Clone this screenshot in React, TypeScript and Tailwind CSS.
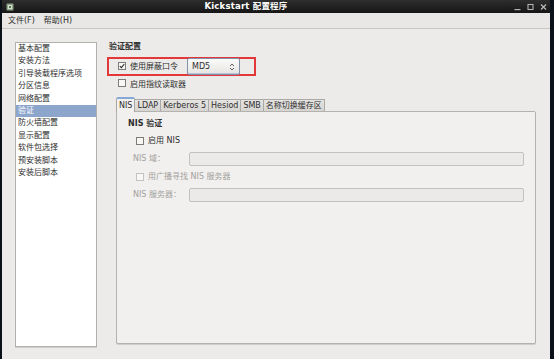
import React from "react";

const FONT = { fontFamily: '"DejaVu Sans", "Noto Sans CJK SC", sans-serif' };

function Check({ checked = false, disabled = false }: { checked?: boolean; disabled?: boolean }) {
  return (
    <span
      className={`inline-flex items-center justify-center w-[8px] h-[8px] border bg-[#f7f7f6] ${
        disabled ? "border-[#c4c2be]" : "border-[#7e7c78]"
      }`}
    >
      {checked && (
        <svg width="6" height="6" viewBox="0 0 6 6">
          <path d="M0.8 3.1 L2.4 4.7 L5.3 1.0" stroke="#2a2a2a" strokeWidth="1.1" fill="none" />
        </svg>
      )}
    </span>
  );
}

const navItems = [
  "基本配置",
  "安装方法",
  "引导装载程序选项",
  "分区信息",
  "网络配置",
  "验证",
  "防火墙配置",
  "显示配置",
  "软件包选择",
  "预安装脚本",
  "安装后脚本",
];

const tabs = ["NIS", "LDAP", "Kerberos 5", "Hesiod", "SMB", "名称切换缓存区"];

export default function App() {
  return (
    <div className="w-[554px] h-[359px] bg-[#0b1118] flex overflow-hidden text-[8px] text-[#2e2e2e]" style={FONT}>
      <div className="ml-[2px] w-[548px] h-full flex flex-col bg-[#ecebe9]">
        {/* title bar */}
        <div className="h-[13px] flex items-center bg-gradient-to-b from-[#2e2e2e] to-[#161616] relative">
          <div className="w-[12px] pl-[4px] flex items-center">
            <svg width="8" height="8" viewBox="0 0 8 8">
              <rect x="0.5" y="0.5" width="7" height="7" rx="1" fill="#8fa58a" />
              <rect x="2" y="2" width="4" height="4" fill="#d6e0cf" />
              <rect x="3" y="3" width="2" height="2" fill="#5d7358" />
            </svg>
          </div>
          <div className="flex-1 text-center pr-[36px] text-white font-bold text-[8.5px] leading-[13px] tracking-[0.2px]">
            Kickstart 配置程序
          </div>
          <div className="flex items-center gap-[6px] pr-[3px] text-[#b4b4b4]">
            <svg width="7" height="8" viewBox="0 0 7 8">
              <rect x="0.5" y="6" width="6" height="1.2" fill="#b0b0b0" />
            </svg>
            <svg width="7" height="8" viewBox="0 0 7 8">
              <rect x="1" y="1.5" width="5" height="5" stroke="#b0b0b0" strokeWidth="1.1" fill="none" />
            </svg>
            <svg width="7" height="8" viewBox="0 0 7 8">
              <path d="M1 1.5 L6 6.5 M6 1.5 L1 6.5" stroke="#b8b8b8" strokeWidth="1.3" />
            </svg>
          </div>
        </div>
        {/* menu bar */}
        <div className="h-[16px] flex items-center gap-[9px] pl-[6px] bg-[#e8e7e5] border-b border-[#cac8c4] leading-none">
          <span>文件(F)</span>
          <span>帮助(H)</span>
        </div>
        {/* body */}
        <div className="flex pt-[13px] pl-[13px]">
          <div className="w-[82px] h-[305px] bg-white border border-[#b2b0ac] shadow-[0_1px_0_#d0ceca] flex flex-col">
            {navItems.map((it, i) => (
              <div
                key={it}
                className={`h-[12.4px] leading-[12.4px] pl-[2px] whitespace-nowrap ${
                  i === 5 ? "bg-[#8ca5cb] text-white" : ""
                }`}
              >
                {it}
              </div>
            ))}
          </div>
          <div className="ml-[10px] flex flex-col">
            <div className="h-[10px] leading-[10px] pl-[2px] font-bold">验证配置</div>
            <div className="mt-[5px] w-[149px] h-[19px] border-2 border-[#e2383a] flex items-center">
              <div className="ml-[9px]"><Check checked /></div>
              <span className="ml-[4px] leading-none">使用屏蔽口令</span>
              <div className="ml-[9px] w-[53px] h-[17px] border border-[#8390ab] rounded-[2px] bg-gradient-to-b from-[#fbfbfa] to-[#e6e5e2] flex items-center justify-between pl-[4px] pr-[4px] shadow-[inset_0_-1px_0_#b8c2d6]">
                <span className="leading-none">MD5</span>
                <svg width="6" height="8" viewBox="0 0 6 8">
                  <path d="M1 3 L3 1 L5 3 M1 5 L3 7 L5 5" stroke="#555" strokeWidth="0.9" fill="none" />
                </svg>
              </div>
            </div>
            <div className="mt-[4px] h-[10px] flex items-center">
              <div className="ml-[11px]"><Check /></div>
              <span className="ml-[4px] leading-none">启用指纹读取器</span>
            </div>
            {/* tabs */}
            <div className="mt-[6px] ml-[9px] flex items-end h-[15px]">
              {tabs.map((t, i) =>
                i === 0 ? (
                  <div
                    key={t}
                    className="h-[15px] px-[2px] flex items-center bg-[#f1f0ee] border border-b-0 border-[#a9a7a3] border-t-[#86a9d8] border-t-2 rounded-t-[2px] relative z-10 -mb-px leading-none"
                  >
                    {t}
                  </div>
                ) : (
                  <div
                    key={t}
                    className="h-[12px] px-[2px] flex items-center bg-gradient-to-b from-[#e6e4e1] to-[#d7d5d1] border border-b-0 border-l-0 border-[#aba9a5] leading-none"
                  >
                    {t}
                  </div>
                )
              )}
            </div>
            <div className="ml-[9px] w-[420px] h-[233px] bg-[#f1f0ee] border border-[#b4b2ae] rounded-[2px] shadow-[0_1px_0_#cfcdc9] pl-[11px] pt-[7px]">
              <div className="h-[10px] leading-[10px] font-bold">NIS 验证</div>
              <div className="mt-[7px] h-[10px] flex items-center pl-[8px]">
                <Check />
                <span className="ml-[4px] leading-none">启用 NIS</span>
              </div>
              <div className="mt-[6px] h-[14px] flex items-center">
                <span className="w-[61px] pl-[5px] text-[#a3a19d] leading-none">NIS 域：</span>
                <div className="w-[335px] h-[14px] border border-[#c3c1bd] rounded-[2px] bg-[#ebeae8]" />
              </div>
              <div className="mt-[6px] h-[10px] flex items-center pl-[8px]">
                <Check disabled />
                <span className="ml-[4px] leading-none text-[#a3a19d]">用广播寻找 NIS 服务器</span>
              </div>
              <div className="mt-[6px] h-[14px] flex items-center">
                <span className="w-[61px] pl-[5px] text-[#a3a19d] leading-none">NIS 服务器：</span>
                <div className="w-[335px] h-[14px] border border-[#c3c1bd] rounded-[2px] bg-[#ebeae8]" />
              </div>
            </div>
          </div>
        </div>
      </div>
    </div>
  );
}
